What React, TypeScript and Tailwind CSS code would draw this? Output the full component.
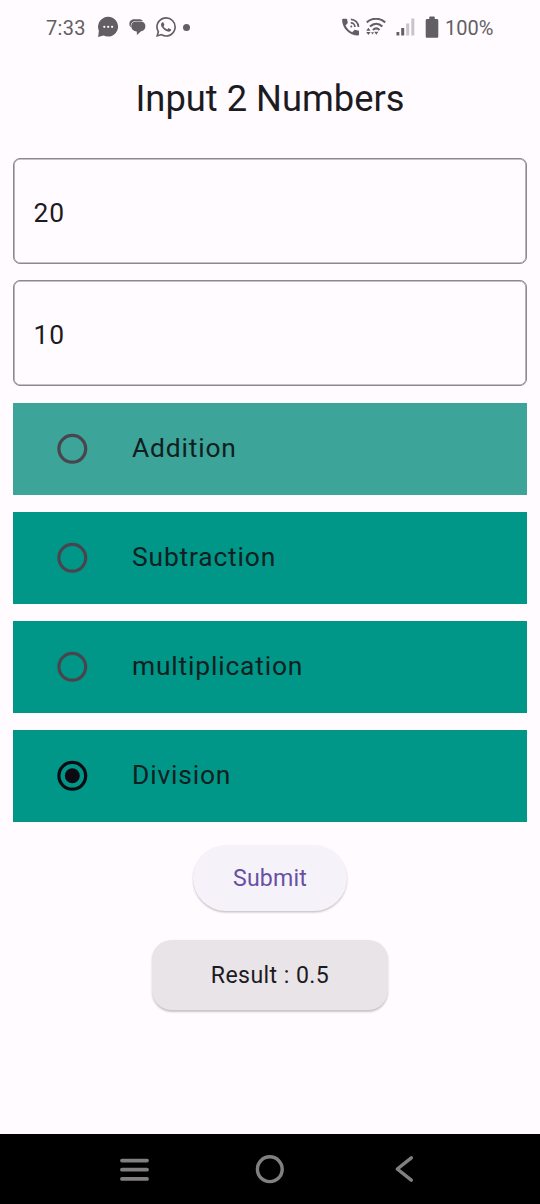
import { useState } from "react";

function ChatIcon() {
  return (
    <svg width="22" height="22" viewBox="0 0 22 22" className="ml-[11px] shrink-0">
      <path d="M11.200 .8a9.900 9.900 0 1 1-4.600 18.700L1.100 21l.8-6.200A9.900 9.900 0 0 1 11.200 .8z" fill="#625f64" />
      <circle cx="7.300" cy="10.800" r="1.150" fill="#fffbff" />
      <circle cx="11.200" cy="10.800" r="1.150" fill="#fffbff" />
      <circle cx="15.100" cy="10.800" r="1.150" fill="#fffbff" />
    </svg>
  );
}

function BubblesIcon() {
  return (
    <svg width="18" height="18" viewBox="0 0 18 18" className="ml-2.5 shrink-0" fill="#625f64">
      <path d="M1.800 9.200C-.6 7.500-.3 1.300 5.200 1.300h4.600c1.900 0 3.300.6 4.100 1.600H6.700C3.300 2.900 1.300 5.600 1.800 9.200z" />
      <path d="M6.900 3.500h4.700c2.900 0 4.800 1.900 4.800 4.700 0 2.900-1.900 4.900-4.300 5.100l-4.200 3.600-.1-3.500C4.200 13.100 2.200 11.100 2.200 8.200c0-2.800 1.900-4.700 4.700-4.700z" />
    </svg>
  );
}

function WhatsAppIcon() {
  return (
    <svg width="20" height="20" viewBox="0 0 24 24" className="ml-[9px] shrink-0" fill="#625f64">
      <path d="M17.472 14.382c-.297-.149-1.758-.867-2.030-.967-.273-.099-.471-.148-.670.150-.197.297-.767.966-.940 1.164-.173.199-.347.223-.644.075-.297-.150-1.255-.463-2.390-1.475-.883-.788-1.480-1.761-1.653-2.059-.173-.297-.018-.458.130-.606.134-.133.298-.347.446-.520.149-.174.198-.298.298-.497.099-.198.050-.371-.025-.520-.075-.149-.669-1.612-.916-2.207-.242-.579-.487-.500-.669-.510-.173-.008-.371-.010-.570-.010-.198 0-.520.074-.792.372-.272.297-1.040 1.016-1.040 2.479 0 1.462 1.065 2.875 1.213 3.074.149.198 2.096 3.200 5.077 4.487.709.306 1.262.489 1.694.625.712.227 1.360.195 1.871.118.571-.085 1.758-.719 2.006-1.413.248-.694.248-1.289.173-1.413-.074-.124-.272-.198-.570-.347m-5.421 7.403h-.004a9.870 9.870 0 01-5.031-1.378l-.361-.214-3.741.982.998-3.648-.235-.374a9.860 9.860 0 01-1.510-5.260c.001-5.450 4.436-9.884 9.888-9.884 2.640 0 5.122 1.030 6.988 2.898a9.825 9.825 0 012.893 6.994c-.003 5.450-4.437 9.884-9.885 9.884m8.413-18.297A11.815 11.815 0 0012.050 0C5.495 0 .160 5.335.157 11.892c0 2.096.547 4.142 1.588 5.945L.057 24l6.305-1.654a11.882 11.882 0 005.683 1.448h.005c6.554 0 11.890-5.335 11.893-11.893a11.821 11.821 0 00-3.480-8.413z" />
    </svg>
  );
}

function CallIcon() {
  return (
    <svg width="18" height="18" viewBox="0 0 18 18" className="shrink-0" fill="none">
      <path
        d="M1 .8h3.200c.5 0 .9.300 1 .8l.5 3c.1.4 0 .7-.3 1L3.500 7.500c1.500 2.900 3.800 5.300 6.700 6.700l2-2c.3-.3.600-.4 1-.3l3 .6c.5.100.8.500.8 1v3.100c0 .5-.4.900-.9.900C7.300 17.500.1 10.300.1 1.800c0-.6.400-1 .9-1z"
        fill="#625f64"
      />
      <path d="M8.800 4.900c2.300 0 4.100 1.800 4.100 4.100M8.800 1.300c4.200 0 7.700 3.500 7.700 7.700" stroke="#625f64" strokeWidth="1.700" />
      <circle cx="9.300" cy="8.400" r="1" fill="#625f64" />
    </svg>
  );
}

function WifiIcon() {
  return (
    <svg width="20" height="18" viewBox="0 0 20 18" className="ml-[6px] shrink-0" fill="none">
      <path
        d="M.8 4.400c5.300-4.800 13-4.800 18.400 0M4 8.400c3.700-3.400 8.700-3.400 12.400 0M6.900 12c2-1.900 4.600-1.900 6.600 0"
        stroke="#625f64"
        strokeWidth="2.100"
      />
      <path d="M8.200 13.800h4.200l-2.100 3zM.2 12.800 2.400 9.800l2.200 3zM.2 13.900h4.400l-2.200 3zM5 14.300h3l-1.500 2.200z" fill="#625f64" />
    </svg>
  );
}

function SignalIcon() {
  return (
    <svg width="20" height="18" viewBox="0 0 20 18" className="ml-[10.500px] shrink-0">
      <rect x=".5" y="14" width="2.800" height="3.500" fill="#625f64" />
      <rect x="5.200" y="10" width="3" height="7.500" fill="#625f64" />
      <rect x="10.200" y="5.500" width="3" height="12" fill="#c8c4c9" />
      <rect x="15.300" y=".5" width="3" height="17" fill="#c8c4c9" />
    </svg>
  );
}

function BatteryIcon() {
  return (
    <svg width="14" height="23" viewBox="0 0 14 23" className="ml-[9px] shrink-0" fill="#625f64">
      <path d="M4.200 1.400C4.200.9 4.600.5 5.100.5h3.800c.5 0 .9.400.9.900v1.700h2.100c.8 0 1.400.6 1.400 1.400v15.900c0 .8-.6 1.400-1.400 1.400H2.100c-.8 0-1.400-.6-1.400-1.400V4.500c0-.8.600-1.400 1.400-1.400h2.100z" />
    </svg>
  );
}

function StatusBar() {
  return (
    <header className="flex h-[54px] items-center justify-between pr-[46px] pl-[46px] text-[20px] leading-none text-[#625f64]">
      <div className="flex items-center">
        <span className="w-10 pt-0.5 whitespace-nowrap tracking-[0.3px]">7:33</span>
        <ChatIcon />
        <BubblesIcon />
        <WhatsAppIcon />
        <span className="ml-[7px] size-[7px] rounded-full bg-[#625f64]" />
      </div>
      <div className="flex items-center">
        <CallIcon />
        <WifiIcon />
        <SignalIcon />
        <BatteryIcon />
        <span className="ml-[6px] w-[49px] pt-0.5 whitespace-nowrap">100%</span>
      </div>
    </header>
  );
}

function NumberField({ value, onChange }: { value: string; onChange: (value: string) => void }) {
  return (
    <input
      value={value}
      onChange={(event) => onChange(event.target.value)}
      inputMode="decimal"
      className="h-[106px] w-full rounded-[7px] border border-[#8d8790] bg-transparent px-[19.500px] pt-[3px] text-[26.400px] tracking-[0.800px] text-[#1c1b1f] shadow-[inset_0_0_0_0.600px_#8d8790] outline-none"
    />
  );
}

function RadioIcon({ checked }: { checked: boolean }) {
  return (
    <svg width="32" height="32" viewBox="0 0 32 32" className="shrink-0">
      <circle cx="16.300" cy="15.800" r="13.400" fill="none" stroke={checked ? "#0c0a12" : "#49454f"} strokeWidth="3.200" />
      {checked && <circle cx="16.300" cy="15.800" r="7.500" fill="#0c0a12" />}
    </svg>
  );
}

const operations = ["Addition", "Subtraction", "multiplication", "Division"];

function calculate(operation: string, a: number, b: number) {
  if (operation === "Addition") return a + b;
  if (operation === "Subtraction") return a - b;
  if (operation === "multiplication") return a * b;
  return b / a;
}

export default function App() {
  const [first, setFirst] = useState("20");
  const [second, setSecond] = useState("10");
  const [selected, setSelected] = useState("Division");
  const [result, setResult] = useState(0.5);

  return (
    <div className="flex h-[1204px] w-[540px] flex-col overflow-hidden bg-[#fffbff] font-[Roboto,sans-serif] text-[#1c1b1f]">
      <StatusBar />
      <h1 className="mt-[22px] text-center text-[36.300px] leading-[46px]">Input 2 Numbers</h1>

      <main className="mt-9 flex flex-col items-center px-[13px]">
        <div className="flex w-full flex-col gap-4">
          <NumberField value={first} onChange={setFirst} />
          <NumberField value={second} onChange={setSecond} />
        </div>
        <div className="mt-[17px] flex w-full flex-col gap-[16.700px]" role="radiogroup">
          {operations.map((name, index) => (
            <button
              key={name}
              role="radio"
              aria-checked={selected === name}
              onClick={() => setSelected(name)}
              className={`flex h-[92.200px] w-full items-center pl-[43px] text-left text-[26.400px] tracking-[0.830px] ${
                index === 0 ? "bg-[#3ca499]" : "bg-[#009788]"
              }`}
            >
              <RadioIcon checked={selected === name} />
              <span className="ml-[44px] text-[#10201f]">{name}</span>
            </button>
          ))}
        </div>
        <button
          onClick={() => setResult(calculate(selected, Number(first), Number(second)))}
          className="mt-[23px] h-[66px] w-[154px] rounded-full bg-[#f6f2f9] pt-[3px] text-[23.100px] tracking-[0.200px] text-[#6750a4] shadow-[0_1.500px_2px_rgba(0,0,0,0.22)]"
        >
          Submit
        </button>
        <div className="mt-[29px] flex h-[70px] w-[236px] items-center justify-center rounded-[20px] bg-[#e8e4e8] pt-1 text-[23.100px] tracking-[0.420px] shadow-[0_1.500px_2px_rgba(0,0,0,0.22)]">
          Result : {result}
        </div>
      </main>

      <nav className="mt-auto flex h-[70px] items-center justify-between bg-black px-[118px]">
        <svg width="32" height="32" viewBox="0 0 32 32" stroke="#827f80" strokeWidth="3.800" strokeLinecap="round">
          <path d="M4 7.600h25M4 16.700h25M4 25.900h25" />
        </svg>
        <svg width="32" height="32" viewBox="0 0 32 32" fill="none" stroke="#827f80" strokeWidth="3.400">
          <circle cx="15.800" cy="16.200" r="12.400" />
        </svg>
        <svg width="32" height="32" viewBox="0 0 32 32" fill="none" stroke="#827f80" strokeWidth="3.500" strokeLinecap="round" strokeLinejoin="round">
          <path d="M21.300 4.900 7.300 16l14 11.100" />
        </svg>
      </nav>
    </div>
  );
}
